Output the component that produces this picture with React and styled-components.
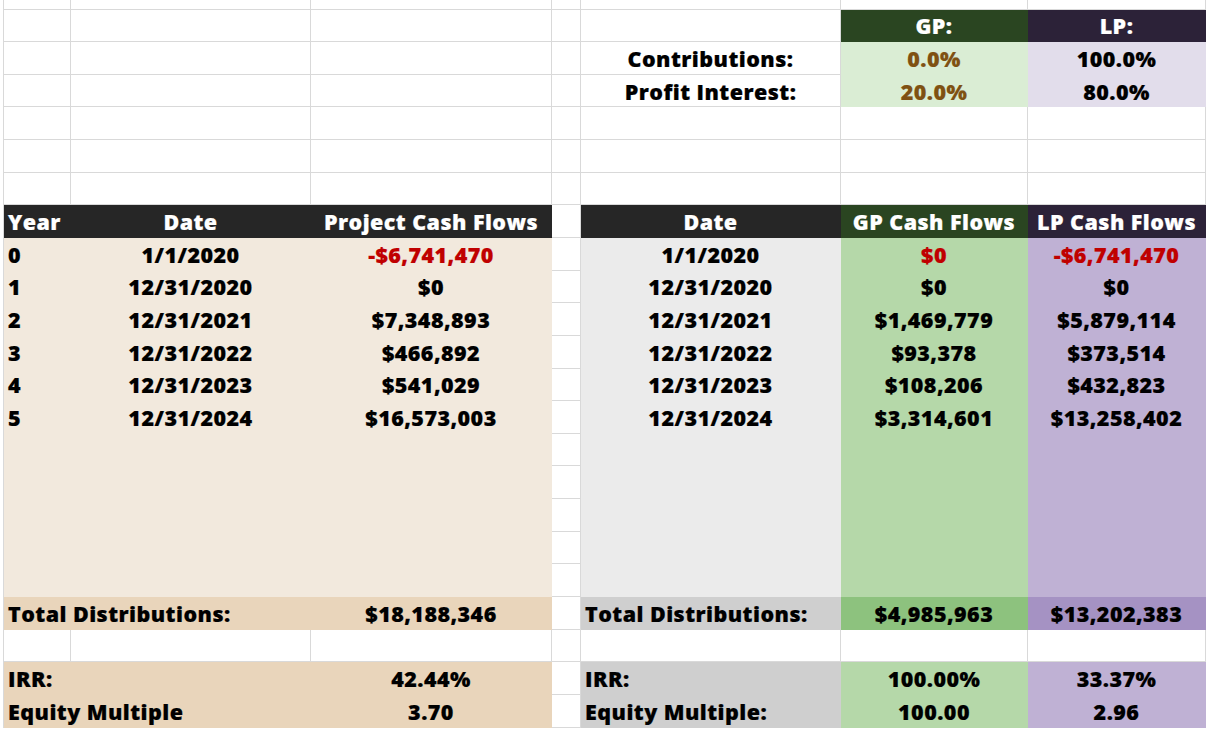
import React from "react";
import styled, { createGlobalStyle } from "styled-components";

// Spreadsheet-style GP / LP waterfall summary

const GRID = "#d9d9d9";
const RED = "#c00000";
const BROWN = "#7f5112";

const tones = {
  plain: { bg: null, fg: "#000" },
  head: { bg: "#262626", fg: "#fff" },
  gpHead: { bg: "#2a4521", fg: "#fff" },
  lpHead: { bg: "#2c2238", fg: "#fff" },
  gpSoft: { bg: "#daedd4", fg: "#000" },
  lpSoft: { bg: "#e2ddeb", fg: "#000" },
  beige: { bg: "#f2e9dd", fg: "#000" },
  beigeDark: { bg: "#e9d5bb", fg: "#000" },
  grey: { bg: "#ebebeb", fg: "#000" },
  greyDark: { bg: "#cfcfcf", fg: "#000" },
  gp: { bg: "#b5d8a9", fg: "#000" },
  gpDark: { bg: "#8dc27e", fg: "#000" },
  lp: { bg: "#bfb1d4", fg: "#000" },
  lpDark: { bg: "#a592c3", fg: "#000" },
};

const GlobalStyle = createGlobalStyle`
  html, body {
    margin: 0;
    padding: 0;
    background: #fff;
  }
  body {
    font-family: "Open Sans", "Lato", "DejaVu Sans", sans-serif;
  }
`;

const Page = styled.div`
  width: 1208px;
  height: 733px;
  overflow: hidden;
  padding-left: 3px;
  box-sizing: border-box;
`;

const Sheet = styled.div`
  display: grid;
  grid-template-columns: 67px 240px 241px 29px 260px 187px 178px;
  grid-template-rows: 9.5px repeat(22, 32.65px);
  border-left: 1px solid ${GRID};
  width: max-content;
`;

const Cell = styled.div`
  grid-column: span ${(p) => p.$span || 1};
  box-sizing: border-box;
  display: flex;
  align-items: center;
  justify-content: ${(p) => (p.$align === "left" ? "flex-start" : "center")};
  padding: 1px 4px 0;
  background: ${(p) => p.$bg || "#fff"};
  border-right: 1px solid ${(p) => p.$bg || GRID};
  border-bottom: 1px solid ${(p) => p.$bg || GRID};
  color: ${(p) => p.$fg};
  font-size: 21.5px;
  font-weight: 800;
  letter-spacing: 0.45px;
  -webkit-text-stroke: 0.2px currentColor;
  white-space: nowrap;
  overflow: hidden;
`;

const blank = () => Array.from({ length: 7 }, () => ({}));

const flows = [
  ["0", "1/1/2020", "-$6,741,470", "$0", "-$6,741,470"],
  ["1", "12/31/2020", "$0", "$0", "$0"],
  ["2", "12/31/2021", "$7,348,893", "$1,469,779", "$5,879,114"],
  ["3", "12/31/2022", "$466,892", "$93,378", "$373,514"],
  ["4", "12/31/2023", "$541,029", "$108,206", "$432,823"],
  ["5", "12/31/2024", "$16,573,003", "$3,314,601", "$13,258,402"],
];

const red = (v) => (v.startsWith("-") ? RED : undefined);

const flowRows = flows.map(([year, date, project, gp, lp], i) => [
  { t: year, tone: "beige", align: "left" },
  { t: date, tone: "beige" },
  { t: project, tone: "beige", color: red(project) },
  {},
  { t: date, tone: "grey" },
  { t: gp, tone: "gp", color: i === 0 ? RED : undefined },
  { t: lp, tone: "lp", color: red(lp) },
]);

const fillerRow = () => [
  { tone: "beige" },
  { tone: "beige" },
  { tone: "beige" },
  {},
  { tone: "grey" },
  { tone: "gp" },
  { tone: "lp" },
];

const rows = [
  blank(),
  [{}, {}, {}, {}, {}, { t: "GP:", tone: "gpHead" }, { t: "LP:", tone: "lpHead" }],
  [
    {}, {}, {}, {},
    { t: "Contributions:" },
    { t: "0.0%", tone: "gpSoft", color: BROWN },
    { t: "100.0%", tone: "lpSoft" },
  ],
  [
    {}, {}, {}, {},
    { t: "Profit Interest:" },
    { t: "20.0%", tone: "gpSoft", color: BROWN },
    { t: "80.0%", tone: "lpSoft" },
  ],
  blank(),
  blank(),
  blank(),
  [
    { t: "Year", tone: "head", align: "left" },
    { t: "Date", tone: "head" },
    { t: "Project Cash Flows", tone: "head" },
    {},
    { t: "Date", tone: "head" },
    { t: "GP Cash Flows", tone: "gpHead" },
    { t: "LP Cash Flows", tone: "lpHead" },
  ],
  ...flowRows,
  fillerRow(),
  fillerRow(),
  fillerRow(),
  fillerRow(),
  fillerRow(),
  [
    { t: "Total Distributions:", tone: "beigeDark", align: "left", span: 2 },
    { t: "$18,188,346", tone: "beigeDark" },
    {},
    { t: "Total Distributions:", tone: "greyDark", align: "left" },
    { t: "$4,985,963", tone: "gpDark" },
    { t: "$13,202,383", tone: "lpDark" },
  ],
  blank(),
  [
    { t: "IRR:", tone: "beigeDark", align: "left", span: 2 },
    { t: "42.44%", tone: "beigeDark" },
    {},
    { t: "IRR:", tone: "greyDark", align: "left" },
    { t: "100.00%", tone: "gp" },
    { t: "33.37%", tone: "lp" },
  ],
  [
    { t: "Equity Multiple", tone: "beigeDark", align: "left", span: 2 },
    { t: "3.70", tone: "beigeDark" },
    {},
    { t: "Equity Multiple:", tone: "greyDark", align: "left" },
    { t: "100.00", tone: "gp" },
    { t: "2.96", tone: "lp" },
  ],
];

export default function App() {
  return (
    <Page>
      <GlobalStyle />
      <Sheet>
        {rows.map((row, r) =>
          row.map((c, i) => {
            const tone = tones[c.tone || "plain"];
            return (
              <Cell
                key={`${r}-${i}`}
                $span={c.span}
                $align={c.align}
                $bg={tone.bg}
                $fg={c.color || tone.fg}
              >
                {c.t}
              </Cell>
            );
          })
        )}
      </Sheet>
    </Page>
  );
}
